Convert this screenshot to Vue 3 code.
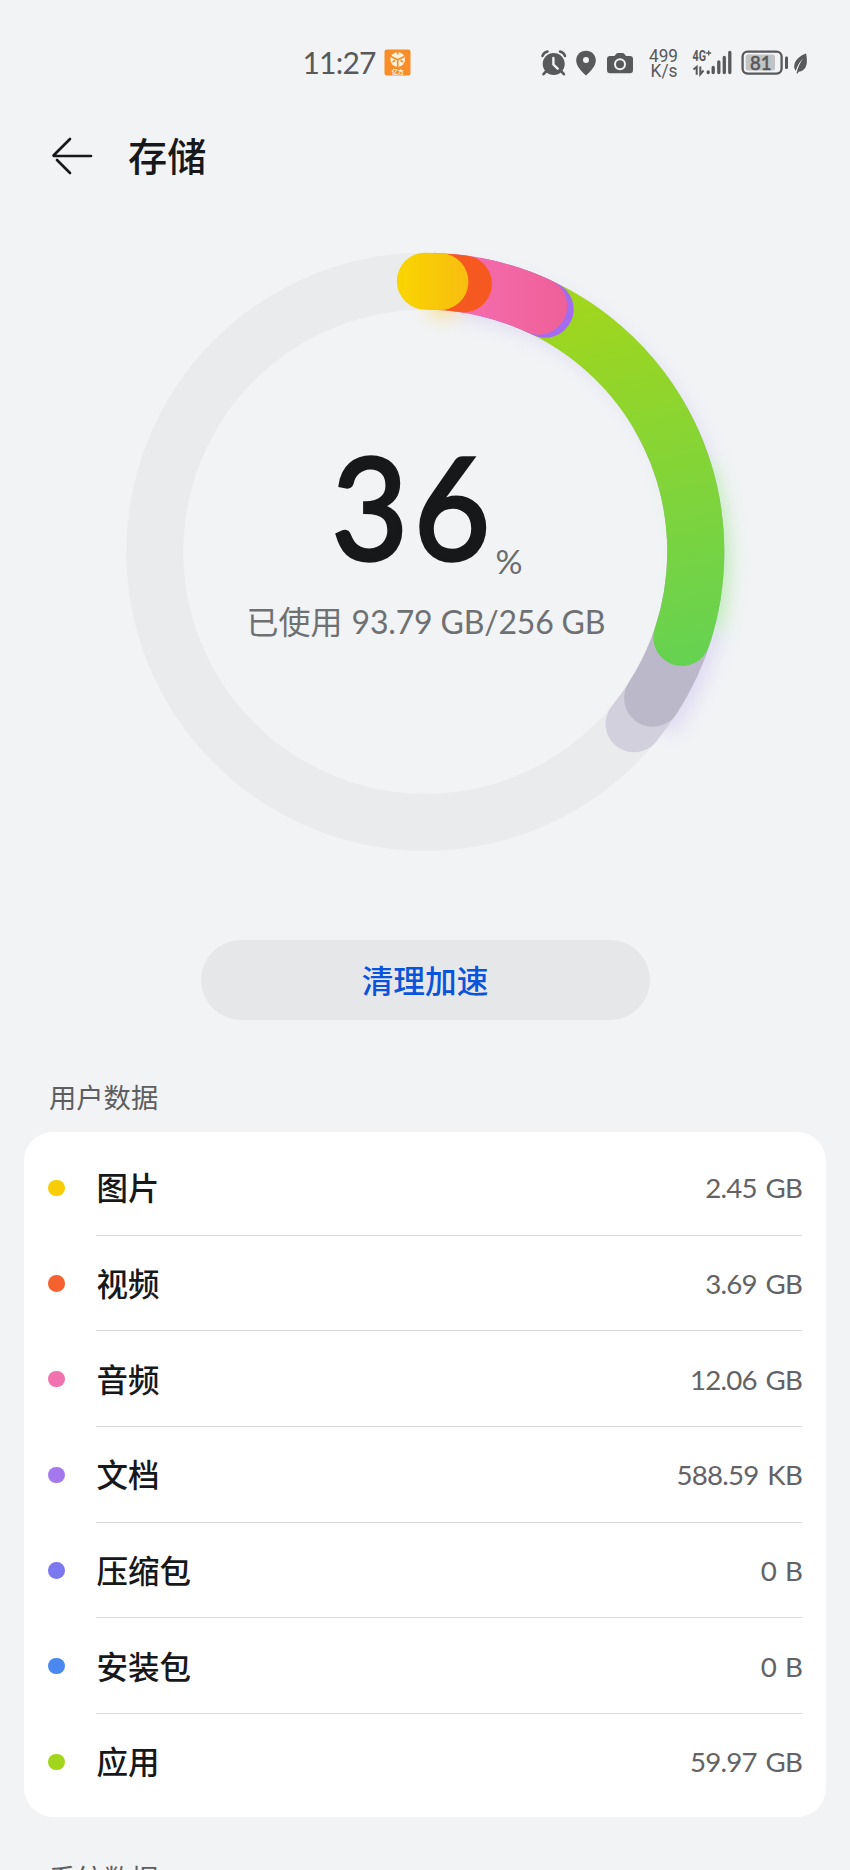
<script setup>
const CX = 425.3
const CY = 551.7
const R = 270.5

const point = (deg) => {
  const a = (deg * Math.PI) / 180
  return `${(CX + R * Math.sin(a)).toFixed(2)} ${(CY - R * Math.cos(a)).toFixed(2)}`
}
const arc = (from, to) => `M${point(from)} A${R} ${R} 0 0 1 ${point(to)}`

// Painted back to front: each later arc lies over the previous one.
const arcs = [
  { from: 60, end: 129.5, color: '#d2d0dd' },
  { from: 60, end: 122.8, color: '#bbb8c9' },
  { from: 20, end: 108.5, color: 'url(#green)' },
  { from: 12, end: 26.3, color: '#a26bf0' },
  { from: 6, end: 24.8, color: 'url(#pink)' },
  { from: 2, end: 8.1, color: '#f6591f' },
  { from: 0, end: 3.1, color: 'url(#yellow)' },
]

const rows = [
  { name: '图片', size: '2.45 GB', tone: 'yellow' },
  { name: '视频', size: '3.69 GB', tone: 'orange' },
  { name: '音频', size: '12.06 GB', tone: 'pink' },
  { name: '文档', size: '588.59 KB', tone: 'purple' },
  { name: '压缩包', size: '0 B', tone: 'indigo' },
  { name: '安装包', size: '0 B', tone: 'blue' },
  { name: '应用', size: '59.97 GB', tone: 'green' },
]
</script>

<template>
  <main class="screen">
    <svg class="status" viewBox="0 0 850 100" width="850" height="100">
      <text class="clock" x="302.5" y="74" textLength="74">11:27</text>
      <rect x="384.5" y="49.500" width="26" height="26" rx="2" fill="#f98d27" />
      <circle cx="397.700" cy="59.500" r="7.300" fill="#fff3e2" />
      <path d="M391 56.500l6.700 3.200 6.700-3.200M397.700 59.700v8M392.500 62l2.500-1.500M403 62l-2.500-1.500M397.700 52v2.500" fill="none" stroke="#f98d27" stroke-width="1.700" />
      <text class="badge" x="397.700" y="73.600" text-anchor="middle">亿方</text>

      <g fill="#58595b" stroke="none">
        <circle cx="553.7" cy="64" r="11" />
        <path d="M546 71.500l-2.500 2.700M561.400 71.500l2.500 2.700M542.500 56q1-3.500 5-4.500M565 56q-1-3.500-5-4.500" fill="none" stroke="#58595b" stroke-width="2.600" stroke-linecap="round" />
        <path d="M553.400 58v6.500l4.300 4.200" fill="none" stroke="#f1f3f5" stroke-width="2.400" stroke-linecap="round" />
        <path fill-rule="evenodd" d="M586 50.700c5.600 0 9.800 4.200 9.800 9.700 0 5.600-5.300 11-9.800 15-4.500-4-9.800-9.400-9.800-15 0-5.500 4.200-9.700 9.800-9.700zm0 6.300a3 3 0 1 0 0 6 3 3 0 0 0 0-6z" />
        <path d="M610 56h4.500l1.500-2q.7-1 2-1h4.500q1.300 0 2 1l1.500 2H630q3 0 3 3v11.200q0 3-3 3h-20q-3 0-3-3V59q0-3 3-3z" />
        <circle cx="620" cy="64.300" r="5" fill="none" stroke="#f1f3f5" stroke-width="2" />
      </g>

      <text class="rate" x="649" y="61.500" textLength="29" lengthAdjust="spacingAndGlyphs">499</text>
      <text class="rate" x="650.500" y="77.300" textLength="27" lengthAdjust="spacingAndGlyphs">K/s</text>
      <text class="network" x="692.500" y="61" textLength="13.500" lengthAdjust="spacingAndGlyphs">4G</text>
      <path d="M708.700 50.500v5M706.200 53h5" stroke="#58595b" stroke-width="1.300" />
      <path d="M693.500 69.500l3.200-2.700v8M700.300 66.500v7.700l3.200-3.700" fill="none" stroke="#58595b" stroke-width="2" />
      <path d="M708.200 71.800v.8M713.200 67.500v5.100M718.800 62v10.600M724.300 57.500v15.100M729.800 52.500v20.100" stroke="#58595b" stroke-width="3.300" stroke-linecap="round" />

      <rect x="742.600" y="51.600" width="39" height="22" rx="5" fill="none" stroke="#58595b" stroke-width="2.300" />
      <rect x="745.700" y="54.600" width="29.300" height="16" rx="2.500" fill="#c2c3c5" />
      <text class="charge" x="750" y="69.500" textLength="21.500" lengthAdjust="spacingAndGlyphs">81</text>
      <rect x="785" y="56.500" width="3" height="12.500" rx="1.200" fill="#58595b" />
      <path d="M806 53.500c-7 2.500-11.500 7.500-11.800 12.500-.1 2 .5 3.700 1.600 4.700 1.500-5 3.700-9 7.200-12-2.800 4-5.200 8.500-6.500 14.500l1.300.3.700-1.700c4.500-.4 7.500-3.500 8.200-8 .4-3.500.2-7-.7-10.300z" fill="#58595b" />
    </svg>

    <header class="bar">
      <svg class="back" viewBox="0 0 44 40" width="44" height="40">
        <path d="M20 3L3.500 19.500M7 24L20 37M4 20h37" fill="none" stroke="#17181a" stroke-width="2.700" stroke-linecap="round" stroke-linejoin="round" />
      </svg>
      <h1>存储</h1>
    </header>

    <svg class="ring" viewBox="0 220 850 700" width="850" height="700">
      <defs>
        <linearGradient id="yellow" gradientUnits="userSpaceOnUse" x1="397" y1="0" x2="468" y2="0">
          <stop offset="0" stop-color="#f9d500" />
          <stop offset="1" stop-color="#f8bd10" />
        </linearGradient>
        <linearGradient id="pink" gradientUnits="userSpaceOnUse" x1="480" y1="0" x2="566" y2="0">
          <stop offset="0" stop-color="#f46aaa" />
          <stop offset="1" stop-color="#ee6098" />
        </linearGradient>
        <linearGradient id="green" gradientUnits="userSpaceOnUse" x1="580" y1="290" x2="660" y2="665">
          <stop offset="0" stop-color="#a2d61c" />
          <stop offset="1" stop-color="#66d251" />
        </linearGradient>
        <filter id="glow" filterUnits="userSpaceOnUse" x="60" y="220" width="730" height="700">
          <feGaussianBlur stdDeviation="9" />
        </filter>
      </defs>
      <circle :cx="CX" :cy="CY" :r="R" fill="none" stroke="#eaebed" stroke-width="57" />
      <g class="shadow" filter="url(#glow)">
        <path :d="arc(6, 126)" stroke="#c9bdf0" />
        <path :d="arc(70, 104)" stroke="#85e272" />
        <path :d="arc(-1, 6)" stroke="#ffc91c" />
      </g>
      <path v-for="a in arcs" :key="a.end" class="segment" :d="arc(a.from, a.end)" :stroke="a.color" />
      <text class="percent" transform="translate(331.5 560) scale(0.93 1)" x="0 88.5" y="0">36</text>
      <text class="sign" x="495.500" y="574" textLength="27" lengthAdjust="spacingAndGlyphs">%</text>
      <text class="used" x="246.500" y="633.500">已使用</text>
      <text class="used" x="351.500" y="634" textLength="254">93.79 GB/256 GB</text>
    </svg>

    <button class="clean" type="button">清理加速</button>

    <h2>用户数据</h2>
    <ul class="card">
      <li v-for="row in rows" :key="row.name">
        <i class="dot" :class="row.tone"></i>
        <div class="line">
          <span class="name">{{ row.name }}</span>
          <span class="size">{{ row.size }}</span>
        </div>
      </li>
    </ul>
    <h2 class="next">系统数据</h2>
  </main>
</template>

<style>
body {
  background: #f1f3f5;
}
</style>

<style scoped>
.screen {
  width: 850px;
  height: 1870px;
  overflow: hidden;
  background: #f1f3f5;
  color: #17181a;
  font-family: Lato, "Noto Sans CJK SC", sans-serif;
}
svg {
  display: block;
}
svg text {
  font-family: Lato, "Noto Sans CJK SC", sans-serif;
  fill: #58595b;
}
.clock {
  font-size: 30px;
  font-weight: 400;
}
svg .badge {
  font-size: 6px;
  font-weight: 700;
  fill: #fff3e2;
}
svg .rate {
  font-family: Roboto, sans-serif;
  font-size: 17.500px;
}
svg .network {
  font-family: Roboto, sans-serif;
  font-size: 14.500px;
  font-weight: 700;
}
svg .charge {
  font-size: 19px;
  font-weight: 400;
  stroke: #58595b;
  stroke-width: 0.6px;
}
.bar {
  display: flex;
  align-items: center;
  height: 112px;
  padding-left: 50px;
}
h1 {
  margin: 0 0 0 34px;
  font-size: 39.200px;
  font-weight: 500;
  line-height: 60px;
}
.ring {
  margin-top: 8px;
}
.segment {
  fill: none;
  stroke-width: 57px;
  stroke-linecap: round;
}
.shadow {
  fill: none;
  stroke-width: 50px;
  opacity: 0.45;
  transform: translate(9px, 10px);
}
svg .percent {
  font-size: 142px;
  font-weight: 400;
  fill: #17181a;
  stroke: #17181a;
  stroke-width: 3.500px;
}
svg .sign {
  font-size: 32px;
  fill: #6b6c6e;
}
svg .used {
  font-size: 32px;
  font-weight: 400;
  fill: #6f7072;
}
.clean {
  display: block;
  width: 449px;
  height: 80px;
  margin: 20px auto 0;
  padding: 0 0 2px;
  border: 0;
  border-radius: 40px;
  background: #e6e7e9;
  color: #0a54dc;
  font: 500 31.700px/78px "Noto Sans CJK SC", sans-serif;
}
h2 {
  margin: 58px 0 0 49px;
  color: #5d5e60;
  font-size: 27.300px;
  font-weight: 400;
  line-height: 40px;
}
.card {
  margin: 14px 24px 0;
  padding: 8px 24px 7px;
  list-style: none;
  border-radius: 29px;
  background: #fff;
}
li {
  display: flex;
  align-items: center;
  height: 95.670px;
}
.dot {
  width: 16.500px;
  height: 16.500px;
  border-radius: 50%;
}
.line {
  flex: 1;
  display: flex;
  align-items: center;
  justify-content: space-between;
  box-sizing: border-box;
  height: 100%;
  margin-left: 31px;
  border-bottom: 1px solid #d8d9da;
}
li:last-child .line {
  border-bottom-color: transparent;
}
.name {
  margin-left: 1px;
  padding-bottom: 2px;
  font-size: 31.500px;
  font-weight: 500;
}
.size {
  padding-top: 1px;
  color: #636365;
  font-size: 27.700px;
  letter-spacing: -0.8px;
  word-spacing: 2.500px;
}
.yellow { background: #f8cd05; }
.orange { background: #f5622f; }
.pink { background: #f072ae; }
.purple { background: #a678ee; }
.indigo { background: #7c78f0; }
.blue { background: #4a88ef; }
.green { background: #a2d61c; }
.next {
  margin-top: 42px;
}
</style>
